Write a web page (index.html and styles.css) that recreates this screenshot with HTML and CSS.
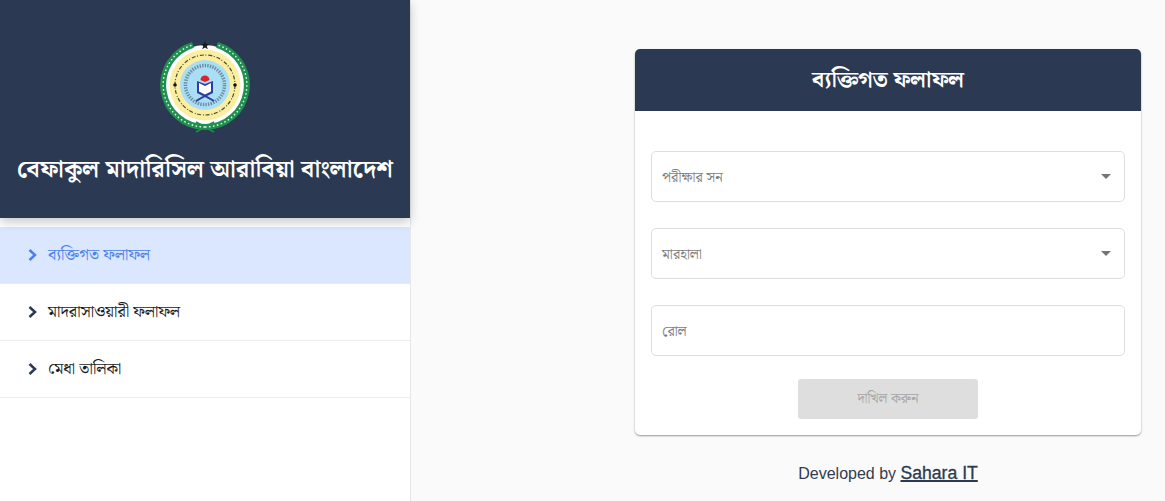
FILE: index.html
```
<!DOCTYPE html>
<html lang="bn">
<head>
<meta charset="utf-8">
<title>ব্যক্তিগত ফলাফল</title>
<link rel="stylesheet" href="styles.css">
</head>
<body>
<div class="app">
  <aside class="sidebar">
    <header class="brand">
      <svg class="logo" viewBox="0 0 92 92" width="92" height="92" aria-hidden="true">
        <circle cx="46" cy="44" r="40" fill="#fff"/>
        <path d="M37 91 L55 81 M55 91 L37 81" stroke="#1f8a4c" stroke-width="2"/>
        <path d="M46 86 A42 42 0 0 1 34 3.8 M46 86 A42 42 0 0 0 58 3.8" fill="none" stroke="#1f8f50" stroke-width="6"/>
        <path d="M46 86 A42 42 0 0 1 34 3.8 M46 86 A42 42 0 0 0 58 3.8" fill="none" stroke="#e6f4e4" stroke-width="1.4" stroke-dasharray="1.6 2.4"/>
        <circle cx="46" cy="44" r="35.5" fill="#fbeea0"/>
        <circle cx="46" cy="44" r="30" fill="none" stroke="#4a4a30" stroke-width="1.2" stroke-dasharray="4 1.5 1 2"/>
        <circle cx="46" cy="44" r="25" fill="#a9def5"/>
        <circle cx="46" cy="44" r="19.5" fill="none" stroke="#3c4a5a" stroke-width="3.5" stroke-dasharray="1.4 1.2" opacity=".55"/>
        <path d="M38 40 L46 43 L54 40 V52 L46 56 L38 52 Z" fill="#2b3f9e"/>
        <path d="M40 42 L46 45 L52 42 V50.5 L46 53.5 L40 50.5 Z" fill="#fff"/>
        <path d="M41.5 39 A4.5 4.5 0 0 1 50.5 39 L46 41 Z" fill="#e0202c"/>
        <path d="M37 60 L46 55 L55 60" fill="none" stroke="#2b3f9e" stroke-width="2"/>
        <path d="M46 0 L47.2 3 L50.5 3 L47.8 5.1 L48.8 8.2 L46 6.4 L43.2 8.2 L44.2 5.1 L41.5 3 L44.8 3 Z" fill="#1c1c1c"/>
        <circle cx="16" cy="44" r="1.8" fill="#111"/>
        <circle cx="76" cy="44" r="1.8" fill="#111"/>
      </svg>
      <h1 class="brand-title">বেফাকুল মাদারিসিল আরাবিয়া বাংলাদেশ</h1>
    </header>
    <nav class="menu">
      <a class="menu-item active"><svg class="chev" viewBox="0 0 10 12" width="10" height="12"><path d="M1.5 1 L7 6 L1.5 11" fill="none" stroke="currentColor" stroke-width="2.5"/></svg><span>ব্যক্তিগত ফলাফল</span></a>
      <a class="menu-item"><svg class="chev" viewBox="0 0 10 12" width="10" height="12"><path d="M1.5 1 L7 6 L1.5 11" fill="none" stroke="currentColor" stroke-width="2.5"/></svg><span>মাদরাসাওয়ারী ফলাফল</span></a>
      <a class="menu-item"><svg class="chev" viewBox="0 0 10 12" width="10" height="12"><path d="M1.5 1 L7 6 L1.5 11" fill="none" stroke="currentColor" stroke-width="2.5"/></svg><span>মেধা তালিকা</span></a>
    </nav>
  </aside>
  <main class="content">
    <section class="card">
      <h2 class="card-title">ব্যক্তিগত ফলাফল</h2>
      <form class="form">
        <div class="field"><span class="placeholder">পরীক্ষার সন</span><i class="caret"></i></div>
        <div class="field"><span class="placeholder">মারহালা</span><i class="caret"></i></div>
        <div class="field"><span class="placeholder">রোল</span></div>
        <button class="submit" type="button" disabled>দাখিল করুন</button>
      </form>
    </section>
    <p class="credit">Developed by <a class="credit-link">Sahara IT</a></p>
  </main>
</div>
</body>
</html>
```
FILE: styles.css
```
* { box-sizing: border-box; }
html, body { margin: 0; height: 100%; }
body {
  font-family: "Noto Serif Bengali", "Noto Sans Bengali", "Lohit Bengali", "Noto Sans", "Liberation Sans", serif;
  background: #fafafa;
  overflow: hidden;
}
.app { display: flex; height: 501px; }
.sidebar {
  width: 411px;
  flex: none;
  background: #fff;
  border-right: 1px solid #e8e8e8;
}
.brand {
  height: 218px;
  background: #2b3952;
  display: flex;
  flex-direction: column;
  align-items: center;
  padding-top: 41px;
  box-shadow: 0 4px 10px rgba(0,0,0,.22);
  position: relative;
}
.logo { display: block; }
.brand-title {
  margin: 17px 0 0;
  color: #fff;
  font-size: 24.5px;
  line-height: 40px;
  font-weight: 700;
  white-space: nowrap;
}
.menu { margin-top: 9px; }
.menu-item {
  height: 57px;
  display: flex;
  align-items: center;
  gap: 10px;
  padding-left: 28px;
  color: #1a1a1a;
  font-size: 16.4px;
  border-bottom: 1px solid #ececec;
}
.menu-item .chev { color: #2b3952; }
.menu-item.active { background: #dbe7fe; color: #4a80ee; border-bottom-color: #e4eafa; }
.menu-item.active .chev { color: #4a80ee; }
.content {
  flex: 1;
  padding: 49px 24px 0 224px;
  display: flex;
  flex-direction: column;
}
.card {
  height: 386px;
  background: #fff;
  border-radius: 5px;
  box-shadow: 0 1px 2px rgba(0,0,0,.4);
  overflow: hidden;
}
.card-title {
  margin: 0;
  height: 62px;
  background: #2b3952;
  color: #fff;
  font-size: 22.8px;
  line-height: 62px;
  font-weight: 700;
  text-align: center;
}
.form {
  padding: 40px 16px 0;
  display: flex;
  flex-direction: column;
  gap: 26px;
}
.field {
  height: 51px;
  border: 1px solid #dedede;
  border-radius: 5px;
  display: flex;
  align-items: center;
  justify-content: space-between;
  padding: 1px 13px 0 10px;
  background: #fff;
}
.placeholder { color: #7d7d7d; font-size: 14.4px; }
.caret {
  width: 0;
  height: 0;
  margin-top: -1px;
  border-left: 5.5px solid transparent;
  border-right: 5.5px solid transparent;
  border-top: 5.5px solid #757575;
}
.submit {
  align-self: center;
  margin-top: -3px;
  width: 180px;
  height: 40px;
  border: 0;
  border-radius: 3px;
  background: #dedede;
  color: #a6a6a6;
  font: inherit;
  font-size: 14px;
}
.credit {
  margin: 26px 0 0;
  text-align: center;
  color: #333c4e;
  font-family: "Liberation Sans", sans-serif;
  font-size: 16px;
  line-height: 24px;
}
.credit-link {
  color: #2b3952;
  font-size: 17.6px;
  text-decoration: underline;
  text-decoration-thickness: 1.5px;
  -webkit-text-stroke: .3px #2b3952;
}
```
